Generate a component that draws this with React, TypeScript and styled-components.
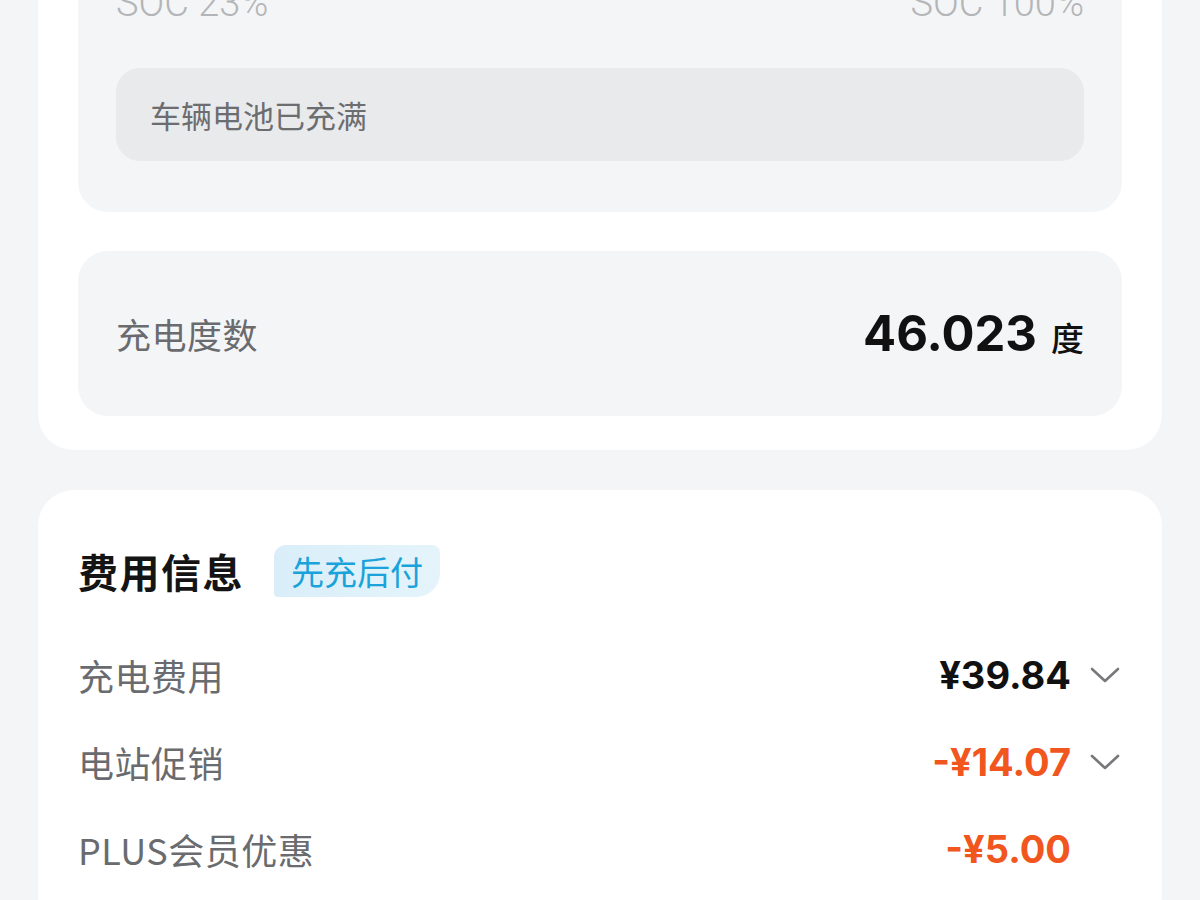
import React from 'react'
import styled, {createGlobalStyle} from 'styled-components'

const GlobalStyle = createGlobalStyle`
    html, body {
        margin: 0;
        padding: 0;
        background: #f4f5f7;
        font-family: "Noto Sans CJK SC", "Noto Sans", sans-serif;
        overflow: hidden;
    }
`

const Page = styled.div`
    width: 1200px;
    height: 900px;
    overflow: hidden;
    padding: 0 38px;
    box-sizing: border-box;
    display: flex;
    flex-direction: column;
    gap: 40px;
`

const Card = styled.section<{$top?: boolean}>`
    background: #ffffff;
    border-radius: 36px;
    padding: ${p => p.$top ? '0 40px 34px' : '55px 40px 40px'};
    margin-top: ${p => p.$top ? '-111px' : '0'};
    display: flex;
    flex-direction: column;
`

const Panel = styled.div`
    background: #f4f5f7;
    border-radius: 30px;
    padding: 0 38px;
    display: flex;
    flex-direction: column;
`

const SocPanel = styled(Panel)`
    padding-top: 89px;
    padding-bottom: 51px;
    border-top-left-radius: 0;
    border-top-right-radius: 0;
`

const SocRow = styled.div`
    display: flex;
    justify-content: space-between;
    font-family: Roboto, "Noto Sans", sans-serif;
    font-weight: 300;
    font-size: 38px;
    line-height: 50px;
    color: #b4b5b8;
`

const Notice = styled.div`
    margin-top: 40px;
    height: 93px;
    border-radius: 24px;
    background: #e9eaec;
    display: flex;
    align-items: center;
    padding: 0 34px;
    font-size: 31px;
    color: #6c6d70;
`

const EnergyPanel = styled(Panel)`
    margin-top: 39px;
    height: 165px;
    flex-direction: row;
    align-items: center;
    justify-content: space-between;
`

const Label = styled.span`
    font-size: 35px;
    color: #6a6b6e;
    letter-spacing: 0.5px;
`

const Energy = styled.div`
    display: flex;
    align-items: baseline;
    gap: 14px;
    color: #111;
`

const EnergyNum = styled.span`
    font-family: Inter, "Noto Sans", sans-serif;
    font-weight: 700;
    font-size: 49px;
`

const EnergyUnit = styled.span`
    font-size: 33px;
    font-weight: 500;
`

const TitleRow = styled.div`
    display: flex;
    align-items: center;
    gap: 30px;
    height: 52px;
`

const Title = styled.h2`
    margin: 0;
    font-size: 40px;
    font-weight: 700;
    color: #141414;
    letter-spacing: 1.5px;
`

const Tag = styled.span`
    height: 52px;
    padding: 0 17px;
    display: flex;
    align-items: center;
    font-size: 33px;
    color: #1aa2da;
    background: linear-gradient(90deg, #d9eef9, #e5f4fb);
    border-radius: 12px 8px 24px 4px;
`

const Rows = styled.div`
    margin-top: 34px;
    display: flex;
    flex-direction: column;
`

const Row = styled.div`
    height: 87px;
    display: flex;
    align-items: center;
    justify-content: space-between;
`

const RowLabel = styled(Label)`
    font-size: 36px;
`

const ValueWrap = styled.div`
    display: flex;
    align-items: center;
    gap: 18px;
`

const Amount = styled.span<{$discount?: boolean}>`
    font-family: Inter, "Noto Sans", sans-serif;
    font-weight: 700;
    font-size: 38px;
    color: ${p => p.$discount ? '#f0561d' : '#111'};
`

const ChevronSlot = styled.span`
    width: 32px;
    display: flex;
    justify-content: center;
    margin-right: 1px;
`

const Chevron = () => (
    <svg width="30" height="18" viewBox="0 0 30 18">
        <path d="M2 3 L15 15 L28 3" fill="none" stroke="#77787b" strokeWidth="2.6" strokeLinecap="round" strokeLinejoin="round"/>
    </svg>
)

const fees = [
    {label: '充电费用', amount: '¥39.84', discount: false, more: true},
    {label: '电站促销', amount: '-¥14.07', discount: true, more: true},
    {label: 'PLUS会员优惠', amount: '-¥5.00', discount: true, more: false},
]

export default function App() {
    return (
        <>
            <GlobalStyle/>
            <Page>
                <Card $top>
                    <SocPanel>
                        <SocRow>
                            <span>SOC 23%</span>
                            <span>SOC 100%</span>
                        </SocRow>
                        <Notice>车辆电池已充满</Notice>
                    </SocPanel>
                    <EnergyPanel>
                        <Label>充电度数</Label>
                        <Energy>
                            <EnergyNum>46.023</EnergyNum>
                            <EnergyUnit>度</EnergyUnit>
                        </Energy>
                    </EnergyPanel>
                </Card>
                <Card>
                    <TitleRow>
                        <Title>费用信息</Title>
                        <Tag>先充后付</Tag>
                    </TitleRow>
                    <Rows>
                        {fees.map(f => (
                            <Row key={f.label}>
                                <RowLabel>{f.label}</RowLabel>
                                <ValueWrap>
                                    <Amount $discount={f.discount}>{f.amount}</Amount>
                                    <ChevronSlot>{f.more && <Chevron/>}</ChevronSlot>
                                </ValueWrap>
                            </Row>
                        ))}
                    </Rows>
                </Card>
            </Page>
        </>
    )
}
